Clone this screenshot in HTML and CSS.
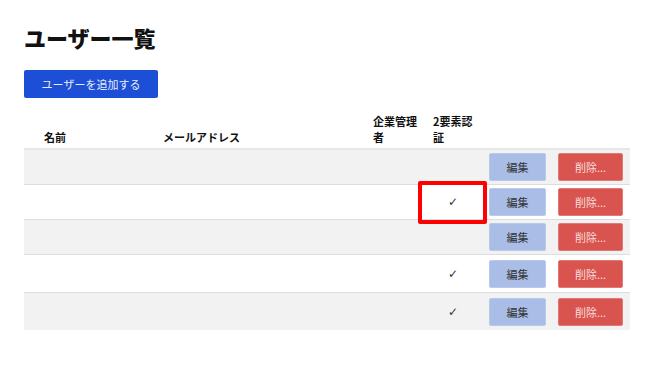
FILE: index.html
```html
<!DOCTYPE html>
<html lang="ja">
<head>
<meta charset="utf-8">
<link rel="stylesheet" href="styles.css">
</head>
<body>
<main class="page">
  <h1 class="title">ユーザー一覧</h1>
  <button class="btn-add">ユーザーを追加する</button>
  <table class="users">
    <colgroup>
      <col class="c-name"><col class="c-mail"><col class="c-admin"><col class="c-2fa"><col class="c-act">
    </colgroup>
    <thead>
      <tr>
        <th class="th-name">名前</th>
        <th class="th-mail">メールアドレス</th>
        <th class="th-admin">企業管理者</th>
        <th class="th-2fa">2要素認証</th>
        <th></th>
      </tr>
    </thead>
    <tbody>
      <tr class="odd"><td></td><td></td><td></td><td class="check"></td><td class="actions"><button class="btn-edit">編集</button><button class="btn-del">削除...</button></td></tr>
      <tr><td></td><td></td><td></td><td class="check">✓</td><td class="actions"><button class="btn-edit">編集</button><button class="btn-del">削除...</button></td></tr>
      <tr class="odd"><td></td><td></td><td></td><td class="check"></td><td class="actions"><button class="btn-edit">編集</button><button class="btn-del">削除...</button></td></tr>
      <tr class="tall"><td></td><td></td><td></td><td class="check">✓</td><td class="actions"><button class="btn-edit">編集</button><button class="btn-del">削除...</button></td></tr>
      <tr class="odd tall"><td></td><td></td><td></td><td class="check">✓</td><td class="actions"><button class="btn-edit">編集</button><button class="btn-del">削除...</button></td></tr>
    </tbody>
  </table>
  <div class="highlight"></div>
</main>
</body>
</html>
```

FILE: styles.css
```css
html, body {
  margin: 0;
  padding: 0;
  background: #ffffff;
}
body {
  font-family: "Noto Sans CJK JP", "Noto Sans", sans-serif;
  color: #111;
}
.page {
  position: relative;
  padding: 22px 17px 0 24px;
}
.title {
  margin: 0;
  font-size: 22px;
  line-height: 30px;
  font-weight: 900;
  color: #111;
}
.btn-add {
  display: block;
  margin-top: 18px;
  width: 134px;
  height: 28px;
  border: none;
  border-radius: 2px;
  background: #1d4fd6;
  color: #e6ecfb;
  font-family: inherit;
  font-size: 11px;
  padding: 0;
}
.users {
  margin-top: 12px;
  border-collapse: collapse;
  table-layout: fixed;
  width: 606px;
  font-size: 11px;
}
.c-name { width: 119px; }
.c-mail { width: 214px; }
.c-admin { width: 60px; }
.c-2fa { width: 56px; }
.c-act { width: 157px; }
.users th {
  text-align: left;
  vertical-align: bottom;
  font-weight: 700;
  line-height: 16px;
  padding: 3px 0 3px 20px;
  color: #111;
  border-bottom: 2px solid #e6e6e6;
}
.users th.th-admin,
.users th.th-2fa {
  padding-left: 16px;
}
.users td {
  height: 34px;
  padding: 0;
  border-bottom: 1px solid #dddddd;
}
.users tr.tall td {
  height: 37px;
}
.users tbody tr:last-child td {
  border-bottom: none;
}
.users tr.odd td {
  background: #f2f2f2;
}
.users td.check {
  text-align: center;
  padding-left: 16px;
  font-family: "DejaVu Sans", sans-serif;
  font-size: 12px;
  color: #333;
}
.users td.actions {
  padding-left: 16px;
  white-space: nowrap;
}
.btn-edit, .btn-del {
  height: 28px;
  border-radius: 2px;
  font-family: inherit;
  font-size: 11px;
  padding: 0;
  vertical-align: middle;
}
.btn-edit {
  width: 57px;
  background: #aabde7;
  border: 1px solid #b9c9ee;
  color: #333;
}
.btn-del {
  width: 65px;
  margin-left: 12px;
  background: #d9534f;
  border: 1px solid #e07a77;
  color: #f7dede;
}
.highlight {
  position: absolute;
  left: 418px;
  top: 181px;
  width: 61px;
  height: 35px;
  border: 4px solid #ff0000;
  border-radius: 2px;
}
```
